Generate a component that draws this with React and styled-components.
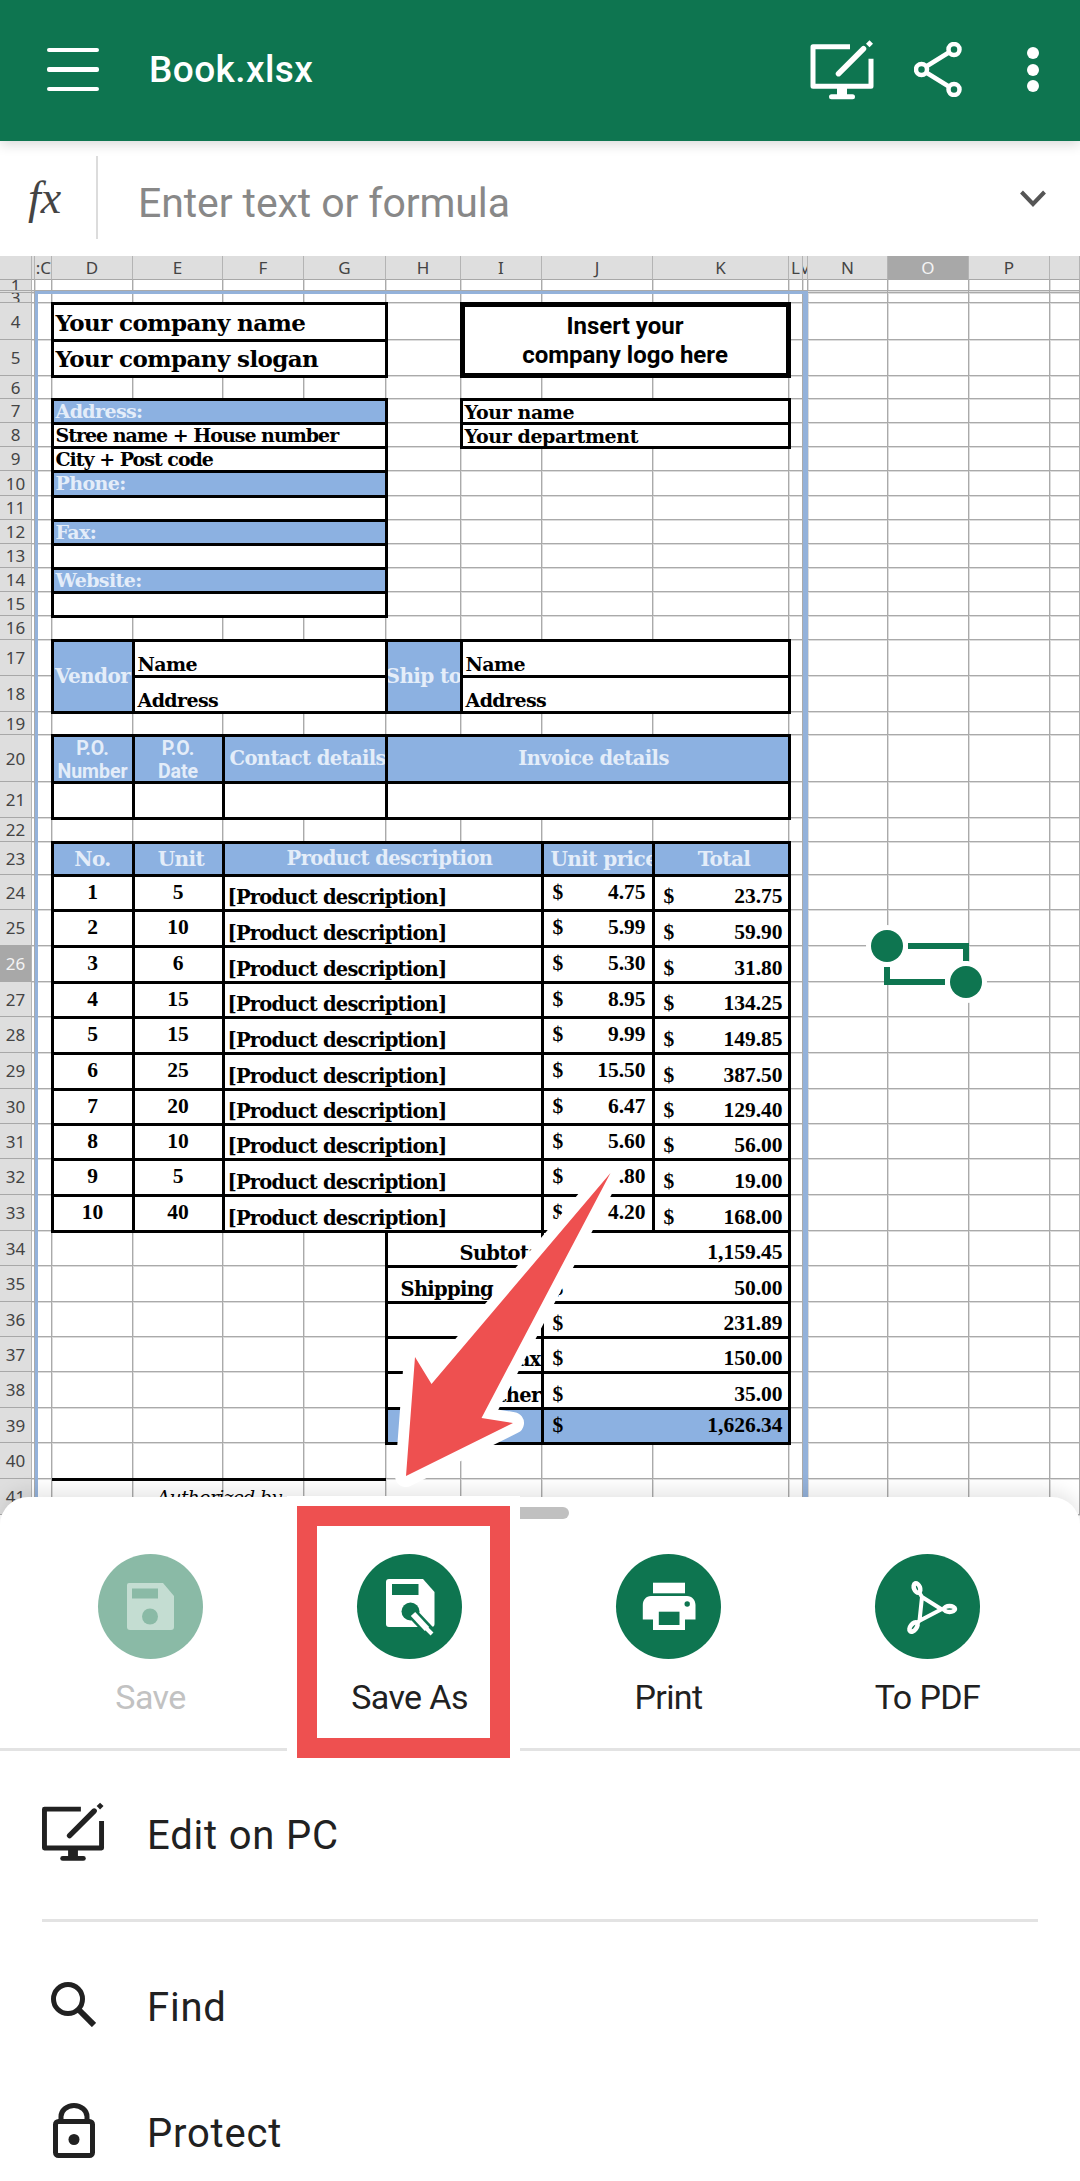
import { Fragment } from "react";
import styled, { createGlobalStyle } from "styled-components";

const GREEN = "#0e7550";
const RED = "#ee5050";
const BLUE = "#8cb1e1";
const INK = "#212121";

const colWidths = [32, 3, 17, 81, 90, 81, 82, 75, 81, 111, 136, 14, 5, 80, 81, 81, 30];
const colNames = ["", "B", "C", "D", "E", "F", "G", "H", "I", "J", "K", "L", "M", "N", "O", "P", "Q"];
const rowHeights = [
  11, 2, 10, 37, 36, 23, 24, 24, 24, 25, 24, 24, 24, 24, 24, 24, 36, 36, 23, 47, 36, 24, 33,
  35, 36, 36, 35, 36, 36, 35, 35, 36, 36, 35, 36, 35, 35, 36, 35, 36, 36,
];
const COL = Object.fromEntries(colNames.map((n, i) => [n, i + 1]));

const GlobalStyle = createGlobalStyle`
  html, body { margin: 0; padding: 0; background: #fff; }
  * { box-sizing: border-box; }
`;

const Page = styled.div`
  position: relative;
  width: 1080px;
  height: 2181px;
  overflow: hidden;
  display: flex;
  flex-direction: column;
  font-family: Roboto, "Liberation Sans", sans-serif;
  background: #fff;
`;

const Header = styled.header`
  position: relative;
  z-index: 2;
  height: 141px;
  flex: none;
  display: flex;
  align-items: center;
  padding: 0 41px 2px 47px;
  background: ${GREEN};
  color: #fff;
  box-shadow: 0 3px 12px rgba(0, 0, 0, 0.16);
`;

const Burger = styled.div`
  width: 52px;
  display: flex;
  flex-direction: column;
  gap: 15px;
  & > span {
    height: 4.5px;
    border-radius: 2px;
    background: #fff;
  }
`;

const Title = styled.div`
  margin-left: 50px;
  font-size: 37px;
  font-weight: 500;
  letter-spacing: 0.4px;
`;

const HeaderActions = styled.div`
  margin-left: auto;
  display: flex;
  align-items: center;
  gap: 39px;
`;

const Dots = styled.div`
  margin-left: 26px;
  display: flex;
  flex-direction: column;
  gap: 4.5px;
  & > span {
    width: 12px;
    height: 12px;
    border-radius: 50%;
    background: #fff;
  }
`;

const FormulaBar = styled.div`
  height: 115px;
  flex: none;
  display: flex;
  align-items: center;
  background: #fff;
  padding-right: 34px;
`;

const Fx = styled.div`
  width: 96px;
  padding-left: 28px;
  font-family: "Liberation Serif", serif;
  font-style: italic;
  font-size: 46px;
  color: #444;
  margin-top: -3px;
`;

const FormulaDivider = styled.div`
  width: 2px;
  height: 83px;
  margin-top: -2px;
  background: #dcdcdc;
`;

const FormulaInput = styled.div`
  flex: 1;
  padding: 8px 0 0 40px;
  font-size: 41px;
  letter-spacing: -0.1px;
  color: #888;
`;

const SheetArea = styled.div`
  height: 1270px;
  flex: none;
  margin-bottom: -29px;
  overflow: hidden;
  background: #fff;
`;

const Sheet = styled.div`
  display: grid;
  width: 1080px;
  grid-template-columns: ${colWidths.map((w) => `${w}px`).join(" ")};
  grid-template-rows: 24px ${rowHeights.map((h) => `${h}px`).join(" ")};
`;

const HeadCell = styled.div`
  grid-column: ${(p) => p.$col};
  grid-row: ${(p) => p.$row};
  display: flex;
  align-items: center;
  justify-content: ${(p) => p.$justify || "center"};
  overflow: hidden;
  white-space: nowrap;
  font-family: "Noto Sans", sans-serif;
  font-size: 17px;
  line-height: 1;
  background: ${(p) => (p.$on ? "#a8a8a8" : "#dedede")};
  color: ${(p) => (p.$on ? "#f4f4f4" : "#444")};
  border-right: 1px solid #b4b4b4;
  border-bottom: 1px solid #a8a8a8;
`;

const Gridline = styled.div`
  grid-column: ${(p) => p.$col};
  grid-row: ${(p) => p.$row};
  border-right: 1px solid #aaa;
  border-bottom: 1px solid #aaa;
  box-shadow: 1px 0 #dcdcdc, 0 1px #dcdcdc;
`;

const Selection = styled.div`
  grid-column: 3 / 14;
  grid-row: 3 / -1;
  border-top: 3px solid #94b2da;
  border-left: 3px solid #94b2da;
  border-right: 5px solid #94b2da;
`;

const Cell = styled.div`
  grid-column: ${(p) => COL[p.$c]} / ${(p) => COL[p.$c2 || p.$c] + 1};
  grid-row: ${(p) => p.$r + 1} / ${(p) => (p.$r2 || p.$r) + 2};
  margin: -1.5px;
  border: ${(p) => p.$border || 3}px solid #000;
  display: flex;
  overflow: hidden;
  white-space: nowrap;
  align-items: ${(p) => p.$v || "center"};
  justify-content: ${(p) => p.$h || "flex-start"};
  padding: ${(p) => p.$pad || "0 2px"};
  background: ${(p) => (p.$fill ? BLUE : "#fff")};
  color: ${(p) => (p.$fill && !p.$dark ? "#e4edf9" : "#000")};
  font-family: ${(p) => (p.$num ? '"Liberation Serif", serif' : '"DejaVu Serif", serif')};
  font-weight: 700;
  font-size: ${(p) => (p.$num ? 21.5 : p.$size || 19)}px;
  letter-spacing: ${(p) => (p.$num ? 0 : p.$track ?? -0.6)}px;
  line-height: 1;
`;

const Small = styled.div`
  padding-top: 2px;
  font-family: Roboto, sans-serif;
  font-size: 19.5px;
  line-height: 23px;
  letter-spacing: 0;
  text-align: center;
  width: 100%;
`;

const LogoText = styled.div`
  width: 100%;
  padding-top: 3px;
  text-align: center;
  font-family: Roboto, sans-serif;
  font-size: 24px;
  line-height: 29px;
  letter-spacing: 0;
  color: #000;
`;

const Sign = styled.span`
  flex: 1;
`;

const Authorized = styled.div`
  grid-column: 4 / 8;
  grid-row: 42;
  margin-top: -1.5px;
  border-top: 3px solid #000;
  text-align: center;
  font-family: "DejaVu Serif", serif;
  font-style: italic;
  font-size: 18.5px;
  letter-spacing: -0.5px;
  padding-top: 6px;
  white-space: nowrap;
  position: relative;
`;

const BottomSheet = styled.section`
  position: relative;
  z-index: 2;
  flex: 1;
  background: #fff;
  border-radius: 28px 28px 0 0;
  box-shadow: 0 -6px 18px rgba(0, 0, 0, 0.1);
`;

const Handle = styled.div`
  position: absolute;
  top: 10px;
  left: 511px;
  width: 58px;
  height: 12px;
  border-radius: 6px;
  background: #c0c0c0;
`;

const ActionRow = styled.div`
  display: grid;
  grid-template-columns: repeat(4, 259px);
  height: 254px;
  padding: 57px 21px 0;
  border-bottom: 3px solid #e3e3e3;
`;

const Action = styled.div`
  display: flex;
  flex-direction: column;
  align-items: center;
`;

const Round = styled.div`
  width: 105px;
  height: 105px;
  border-radius: 50%;
  background: ${(p) => (p.$off ? "#8abaa6" : GREEN)};
  color: ${(p) => (p.$off ? "#c4ddd2" : "#fff")};
  & > svg {
    display: block;
  }
`;

const ActionLabel = styled.div`
  margin-top: 18px;
  font-size: 34px;
  line-height: 40px;
  letter-spacing: -0.6px;
  color: ${(p) => (p.$off ? "#c2c2c2" : INK)};
`;

const Menu = styled.div`
  color: ${INK};
`;

const MenuItem = styled.div`
  height: ${(p) => p.$height}px;
  display: flex;
  align-items: center;
  gap: 42px;
  padding-left: 42px;
  font-size: 40px;
  letter-spacing: 0.8px;
`;

const MenuIcon = styled.div`
  width: 63px;
  margin-top: -6px;
  display: flex;
  justify-content: center;
  & > svg {
    display: block;
  }
`;

const MenuDivider = styled.div`
  height: 3px;
  margin: 0 42px 22px;
  background: #e3e3e3;
`;

const ArrowLayer = styled.svg`
  position: absolute;
  inset: 0;
  z-index: 3;
  pointer-events: none;
`;

const RedBox = styled.div`
  position: absolute;
  z-index: 3;
  left: 297px;
  top: 1506px;
  width: 213px;
  height: 252px;
  border: 20px solid ${RED};
  box-shadow: 0 0 0 10px #fff;
  pointer-events: none;
`;

function EditPcIcon({ width = 64, height = 60 }) {
  return (
    <svg width={width} height={height} viewBox="0 0 64 60" fill="none" stroke="currentColor">
      <path d="M39.5 6.8H2.5V46.2H60.5V18.7" strokeWidth="5" strokeLinejoin="round" />
      <path d="M31.5 48v7" strokeWidth="10" />
      <path d="M21 56.8H42" strokeWidth="5" strokeLinecap="round" />
      <path d="M28 33.7L53 8.7" strokeWidth="5.5" strokeLinecap="round" />
      <path d="M59 .2L62.5 3.7 59 7.2 55.5 3.7Z" fill="currentColor" stroke="none" />
    </svg>
  );
}

function ShareIcon() {
  return (
    <svg width="48" height="55" viewBox="0 0 48 55" fill="none" stroke="#fff" strokeWidth="4.5">
      <path d="M34 11L13 24M13 31L34 44" />
      <circle cx="40" cy="7.5" r="5.5" />
      <circle cx="7.5" cy="27.5" r="5.5" />
      <circle cx="40" cy="47.5" r="5.5" />
    </svg>
  );
}

function SaveGlyph({ hole }) {
  return (
    <svg width="105" height="105" viewBox="0 0 105 105">
      <path d="M31 29H65L76 42V73a3 3 0 0 1-3 3H32a3 3 0 0 1-3-3V31a2 2 0 0 1 2-2Z" fill="currentColor" />
      <rect x="34" y="34.5" width="26" height="10" fill={hole} />
      <circle cx="52" cy="62.5" r="8" fill={hole} />
    </svg>
  );
}

function SaveAsGlyph() {
  return (
    <svg width="105" height="105" viewBox="0 0 105 105">
      <path d="M32 25H66L77.5 38V70a3 3 0 0 1-3 3H32a3 3 0 0 1-3-3V28a3 3 0 0 1 3-3Z" fill="#fff" />
      <rect x="35" y="30" width="26.5" height="11" fill={GREEN} />
      <circle cx="53.5" cy="57.5" r="9" fill={GREEN} />
      <path d="M56 60L73 78" stroke={GREEN} strokeWidth="11" />
      <path d="M56 60L70 75" stroke="#fff" strokeWidth="6" />
      <path d="M69 74L75 80" stroke="#fff" strokeWidth="4" />
    </svg>
  );
}

function PrintGlyph() {
  return (
    <svg width="105" height="105" viewBox="0 0 105 105">
      <rect x="37" y="28.7" width="32" height="10.6" fill="#fff" />
      <path d="M35 42H71C76 42 79.500 46 79.500 51V65.500H69V76H37V65.500H26.800V51C26.800 46 30 42 35 42Z" fill="#fff" />
      <rect x="42.800" y="57.700" width="20.700" height="13.300" fill={GREEN} />
      <circle cx="71.200" cy="50" r="2.700" fill={GREEN} />
    </svg>
  );
}

function PdfGlyph() {
  return (
    <svg width="105" height="105" viewBox="0 0 105 105" fill="none" stroke="#fff" strokeWidth="4.5" strokeLinejoin="round">
      <path d="M44 38L47 43L66.500 55.300L44.500 66.700L47 43M44.500 66.700L41 70M66.500 55.300H70" strokeWidth="4" />
      <ellipse cx="42" cy="34" rx="3" ry="5" transform="rotate(-22 42 34)" />
      <ellipse cx="74.500" cy="55" rx="5.500" ry="3" />
      <ellipse cx="38.500" cy="73" rx="3" ry="5.500" transform="rotate(38 38.500 73)" />
    </svg>
  );
}

function SearchIcon() {
  return (
    <svg width="45" height="45" viewBox="0 0 45 45" fill="none" stroke="currentColor">
      <circle cx="17" cy="17" r="14.5" strokeWidth="5" />
      <path d="M27.500 27.500L43 43" strokeWidth="6" />
    </svg>
  );
}

function LockIcon() {
  return (
    <svg width="42" height="55" viewBox="0 0 42 55" fill="none" stroke="currentColor" strokeWidth="5">
      <rect x="2.500" y="18.500" width="37" height="34" rx="3" />
      <path d="M8 18V13.500a13 11 0 0 1 26 0V18" />
      <circle cx="21" cy="36.500" r="5.500" fill="currentColor" stroke="none" />
    </svg>
  );
}

const addressRows = [
  { r: 7, text: "Address:", fill: true },
  { r: 8, text: "Stree name + House number" },
  { r: 9, text: "City + Post code" },
  { r: 10, text: "Phone:", fill: true },
  { r: 11, text: "" },
  { r: 12, text: "Fax:", fill: true },
  { r: 13, text: "" },
  { r: 14, text: "Website:", fill: true },
  { r: 15, text: "" },
];

const products = [
  [1, 5, "4.75", "23.75"],
  [2, 10, "5.99", "59.90"],
  [3, 6, "5.30", "31.80"],
  [4, 15, "8.95", "134.25"],
  [5, 15, "9.99", "149.85"],
  [6, 25, "15.50", "387.50"],
  [7, 20, "6.47", "129.40"],
  [8, 10, "5.60", "56.00"],
  [9, 5, "3.80", "19.00"],
  [10, 40, "4.20", "168.00"],
];

const totals = [
  { label: "Subtotal", amount: "1,159.45", pad: "0 0 1px 72px" },
  { label: "Shipping cost", amount: "50.00", pad: "0 0 1px 13px" },
  { label: "", amount: "231.89" },
  { label: "Tax", amount: "150.00", end: true },
  { label: "Other", amount: "35.00", end: true },
];

function Spreadsheet() {
  const lines = [];
  rowHeights.forEach((_, r) => {
    colWidths.forEach((_, c) => {
      if (c > 0) lines.push(<Gridline key={`${r}-${c}`} $col={c + 1} $row={r + 2} />);
    });
  });

  return (
    <Sheet>
      <HeadCell $col={1} $row={1} />
      {colNames.map((name, i) =>
        i > 0 ? (
          <HeadCell key={name} $col={i + 1} $row={1} $on={name === "O"} $justify={name === "C" ? "flex-end" : "center"}>
            {name === "B" || name === "Q" ? "" : name === "C" ? ":C" : name}
          </HeadCell>
        ) : null
      )}
      {rowHeights.map((_, r) => (
        <HeadCell key={r} $col={1} $row={r + 2} $on={r + 1 === 26}>
          {r + 1 === 2 ? "" : r + 1}
        </HeadCell>
      ))}
      {lines}
      <Selection />

      <Cell $c="D" $c2="G" $r={4} $size={23} $v="flex-end" $pad="0 2px 5px">Your company name</Cell>
      <Cell $c="D" $c2="G" $r={5} $size={23} $v="flex-end" $pad="0 2px 5px">Your company slogan</Cell>
      <Cell $c="I" $c2="K" $r={4} $r2={5} $border={5}>
        <LogoText>Insert your<br />company logo here</LogoText>
      </Cell>
      <Cell $c="I" $c2="K" $r={7} $v="flex-end" $track={-0.4}>Your name</Cell>
      <Cell $c="I" $c2="K" $r={8} $v="flex-end" $track={-0.4}>Your department</Cell>

      {addressRows.map((row) => (
        <Cell key={row.r} $c="D" $c2="G" $r={row.r} $fill={row.fill} $track={row.fill ? -0.6 : -1}>{row.text}</Cell>
      ))}

      <Cell $c="D" $r={17} $r2={18} $fill $size={20} $h="center" $pad="0">Vendor</Cell>
      <Cell $c="E" $c2="G" $r={17} $v="flex-end" $pad="0 2px 1px 3px">Name</Cell>
      <Cell $c="E" $c2="G" $r={18} $v="flex-end" $pad="0 2px 1px 3px">Address</Cell>
      <Cell $c="H" $r={17} $r2={18} $fill $size={20} $h="center" $pad="0">Ship to</Cell>
      <Cell $c="I" $c2="K" $r={17} $v="flex-end" $pad="0 2px 1px 3px">Name</Cell>
      <Cell $c="I" $c2="K" $r={18} $v="flex-end" $pad="0 2px 1px 3px">Address</Cell>

      <Cell $c="D" $r={20} $fill $h="center" $pad="0"><Small>P.O.<br />Number</Small></Cell>
      <Cell $c="E" $r={20} $fill $h="center" $pad="0"><Small>P.O.<br />Date</Small></Cell>
      <Cell $c="F" $c2="G" $r={20} $fill $pad="0 0 0 5px" $size={19.5}>Contact details</Cell>
      <Cell $c="H" $c2="K" $r={20} $fill $h="center" $size={19.5} $pad="0 0 0 12px">Invoice details</Cell>
      <Cell $c="D" $r={21} />
      <Cell $c="E" $r={21} />
      <Cell $c="F" $c2="G" $r={21} />
      <Cell $c="H" $c2="K" $r={21} />

      <Cell $c="D" $r={23} $fill $h="center" $size={20}>No.</Cell>
      <Cell $c="E" $r={23} $fill $h="center" $size={20} $pad="0 0 0 6px">Unit</Cell>
      <Cell $c="F" $c2="I" $r={23} $fill $h="center" $size={19.5} $pad="0 0 0 14px">Product description</Cell>
      <Cell $c="J" $r={23} $fill $size={20} $pad="0 0 0 7px">Unit price</Cell>
      <Cell $c="K" $r={23} $fill $h="center" $size={20} $pad="0 0 0 6px">Total</Cell>

      {products.map(([no, unit, price, total], i) => (
        <Fragment key={no}>
          <Cell $c="D" $r={24 + i} $h="center" $num>{no}</Cell>
          <Cell $c="E" $r={24 + i} $h="center" $num>{unit}</Cell>
          <Cell $c="F" $c2="I" $r={24 + i} $v="flex-end" $size={19.5} $track={-0.8} $pad="0 2px 1px 3px">[Product description]</Cell>
          <Cell $c="J" $r={24 + i} $num $pad="0 6px 0 9px"><Sign>$</Sign>{price}</Cell>
          <Cell $c="K" $r={24 + i} $v="flex-end" $num $pad="0 5px 1px 9px"><Sign>$</Sign>{total}</Cell>
        </Fragment>
      ))}

      {totals.map((row, i) => (
        <Fragment key={row.amount}>
          <Cell $c="H" $c2="I" $r={34 + i} $v="flex-end" $h={row.end ? "flex-end" : "flex-start"} $size={19.5} $track={-0.7} $pad={row.pad || "0 0 1px"}>{row.label}</Cell>
          <Cell $c="J" $c2="K" $r={34 + i} $v="flex-end" $num $pad="0 5px 1px 9px"><Sign>$</Sign>{row.amount}</Cell>
        </Fragment>
      ))}
      <Cell $c="H" $c2="I" $r={39} $fill />
      <Cell $c="J" $c2="K" $r={39} $fill $dark $num $pad="0 5px 0 9px"><Sign>$</Sign>1,626.34</Cell>

      <Authorized>Authorized by</Authorized>
    </Sheet>
  );
}

export default function App() {
  return (
    <Page>
      <GlobalStyle />
      <Header>
        <Burger><span /><span /><span /></Burger>
        <Title>Book.xlsx</Title>
        <HeaderActions>
          <EditPcIcon width={65} height={60} />
          <ShareIcon />
          <Dots><span /><span /><span /></Dots>
        </HeaderActions>
      </Header>
      <FormulaBar>
        <Fx>fx</Fx>
        <FormulaDivider />
        <FormulaInput>Enter text or formula</FormulaInput>
        <svg width="26" height="17" viewBox="0 0 26 17" fill="none" stroke="#555" strokeWidth="4">
          <path d="M1.500 2L13 14L24.500 2" />
        </svg>
      </FormulaBar>
      <SheetArea>
        <Spreadsheet />
      </SheetArea>
      <BottomSheet>
        <Handle />
        <ActionRow>
          <Action>
            <Round $off><SaveGlyph hole="#8abaa6" /></Round>
            <ActionLabel $off>Save</ActionLabel>
          </Action>
          <Action>
            <Round><SaveAsGlyph /></Round>
            <ActionLabel>Save As</ActionLabel>
          </Action>
          <Action>
            <Round><PrintGlyph /></Round>
            <ActionLabel>Print</ActionLabel>
          </Action>
          <Action>
            <Round><PdfGlyph /></Round>
            <ActionLabel>To PDF</ActionLabel>
          </Action>
        </ActionRow>
        <Menu>
          <MenuItem $height={168}>
            <MenuIcon><EditPcIcon width={63} height={60} /></MenuIcon>
            Edit on PC
          </MenuItem>
          <MenuDivider />
          <MenuItem $height={126}>
            <MenuIcon><SearchIcon /></MenuIcon>
            Find
          </MenuItem>
          <MenuItem $height={126}>
            <MenuIcon><LockIcon /></MenuIcon>
            Protect
          </MenuItem>
        </Menu>
      </BottomSheet>
      <RedBox />
      <ArrowLayer width="1080" height="2181" viewBox="0 0 1080 2181">
        <g>
          <circle cx="887" cy="946" r="21" fill="#fff" />
          <circle cx="966" cy="982" r="21" fill="#fff" />
          <path d="M908 946H966V961M887 967V982H945" fill="none" stroke={GREEN} strokeWidth="6" />
          <circle cx="887" cy="946" r="16" fill={GREEN} />
          <circle cx="966" cy="982" r="16" fill={GREEN} />
        </g>
        <path
          d="M610.500 1173L481.500 1418L513 1423L406 1476L415 1357L431.500 1384Z"
          fill={RED}
          stroke="#fff"
          strokeWidth="22"
          strokeLinejoin="round"
          paintOrder="stroke"
        />
      </ArrowLayer>
    </Page>
  );
}
